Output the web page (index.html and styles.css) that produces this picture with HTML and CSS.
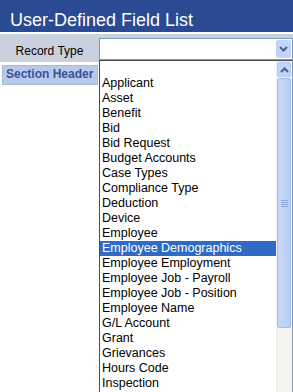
FILE: index.html
```html
<!DOCTYPE html>
<html lang="en">
<head>
    <meta charset="UTF-8">
    <meta name="viewport" content="width=device-width, initial-scale=1.0">
    <title>User-Defined Field List</title>
    <link rel="stylesheet" href="styles.css">
</head>
<body>
    <header class="page-title">User-Defined Field List</header>

    <div class="filter-bar">
        <label class="filter-label">Record Type</label>
        <div class="combo">
            <span class="combo-value"></span>
            <span class="combo-button">
                <svg width="9" height="6" viewBox="0 0 9 6"><path d="M1 1 L4.5 4.5 L8 1" fill="none" stroke="#4d6185" stroke-width="2"/></svg>
            </span>
        </div>
    </div>

    <div class="content">
        <div class="side">
            <div class="section-header">Section Header</div>
        </div>
    </div>

    <!-- open dropdown of the Record Type combo -->
    <div class="dropdown">
        <ul class="options" id="options"></ul>
        <div class="scrollbar">
            <div class="scroll-btn">
                <svg width="9" height="6" viewBox="0 0 9 6"><path d="M1 5 L4.5 1.5 L8 5" fill="none" stroke="#4d6185" stroke-width="2"/></svg>
            </div>
            <div class="scroll-thumb">
                <span class="grip"></span>
                <span class="grip"></span>
                <span class="grip"></span>
                <span class="grip"></span>
            </div>
            <div class="scroll-track"></div>
        </div>
    </div>

    <script>
        const recordTypes = [
            '', 'Applicant', 'Asset', 'Benefit', 'Bid', 'Bid Request', 'Budget Accounts',
            'Case Types', 'Compliance Type', 'Deduction', 'Device', 'Employee',
            'Employee Demographics', 'Employee Employment', 'Employee Job - Payroll',
            'Employee Job - Position', 'Employee Name', 'G/L Account', 'Grant',
            'Grievances', 'Hours Code', 'Inspection'
        ];
        const options = document.getElementById('options');

        recordTypes.forEach(function(name) {
            const li = document.createElement('li');
            li.textContent = name;
            if (name === 'Employee Demographics') {
                li.className = 'selected';
            }
            options.appendChild(li);
        });
    </script>
</body>
</html>
```

FILE: styles.css
```css
body {
    margin: 0;
    width: 293px;
    height: 392px;
    overflow: hidden;
    position: relative;
    font-family: "Liberation Sans", Arial, sans-serif;
    background-color: #fff;
}

.page-title {
    height: 22px;
    padding: 10px 0 0 10px;
    background-color: #2a4a93;
    border-bottom: 2px solid #fff;
    color: #fff;
    font-size: 18px;
    line-height: 20px;
}

.filter-bar {
    display: flex;
    align-items: flex-start;
    height: 28px;
    background-color: #c9d1df;
}

.filter-label {
    width: 99px;
    padding-top: 3px;
    text-align: center;
    font-size: 12px;
    line-height: 28px;
    color: #000;
}

.combo {
    display: flex;
    justify-content: flex-end;
    width: 192px;
    height: 20px;
    margin-top: 4px;
    border: 1px solid #7f9db9;
    background-color: #fff;
}

.combo-value {
    flex: 1;
}

.combo-button {
    display: flex;
    align-items: center;
    justify-content: center;
    width: 15px;
    height: 18px;
    margin: 1px 1px 0 0;
    background-color: #c3d4fb;
    border-radius: 2px;
}

.content {
    display: flex;
}

.side {
    width: 99px;
    padding: 3px 0 0 2px;
}

.section-header {
    width: 96px;
    height: 20px;
    padding-left: 3px;
    box-sizing: border-box;
    border: 1px solid #a9bade;
    background-color: #b9c9e9;
    color: #3851a2;
    font-size: 12px;
    font-weight: bold;
    line-height: 17px;
}

.dropdown {
    position: absolute;
    left: 99px;
    top: 60px;
    width: 192px;
    height: 340px;
    display: flex;
    border-left: 1px solid #4b4b4b;
    border-top: 1px solid #4b4b4b;
    border-right: 1px solid #7f9db9;
    background-color: #fff;
}

.options {
    flex: 1;
    margin: 0;
    padding: 0;
    list-style: none;
}

.options li {
    height: 15px;
    padding-left: 2px;
    font-size: 12.5px;
    line-height: 15px;
    color: #000;
    white-space: nowrap;
}

.options li.selected {
    background-color: #316ac5;
    color: #fff;
}

.scrollbar {
    display: flex;
    flex-direction: column;
    width: 16px;
    background-color: #f4f3ee;
}

.scroll-btn {
    display: flex;
    align-items: center;
    justify-content: center;
    height: 15px;
    margin: 1px;
    background-color: #c3d4fb;
    border: 1px solid #b3c7f3;
    border-radius: 2px;
    box-sizing: border-box;
}

.scroll-thumb {
    display: flex;
    flex-direction: column;
    align-items: center;
    justify-content: center;
    gap: 1px;
    height: 250px;
    margin: 0 1px;
    background: linear-gradient(to right, #c8d8fc, #b9cdf9);
    border: 1px solid #a7bdec;
    border-radius: 2px;
    box-sizing: border-box;
}

.grip {
    width: 7px;
    height: 1px;
    background-color: #8ea8e0;
}

.scroll-track {
    flex: 1;
    border-left: 1px solid #ebe9e2;
}
```
